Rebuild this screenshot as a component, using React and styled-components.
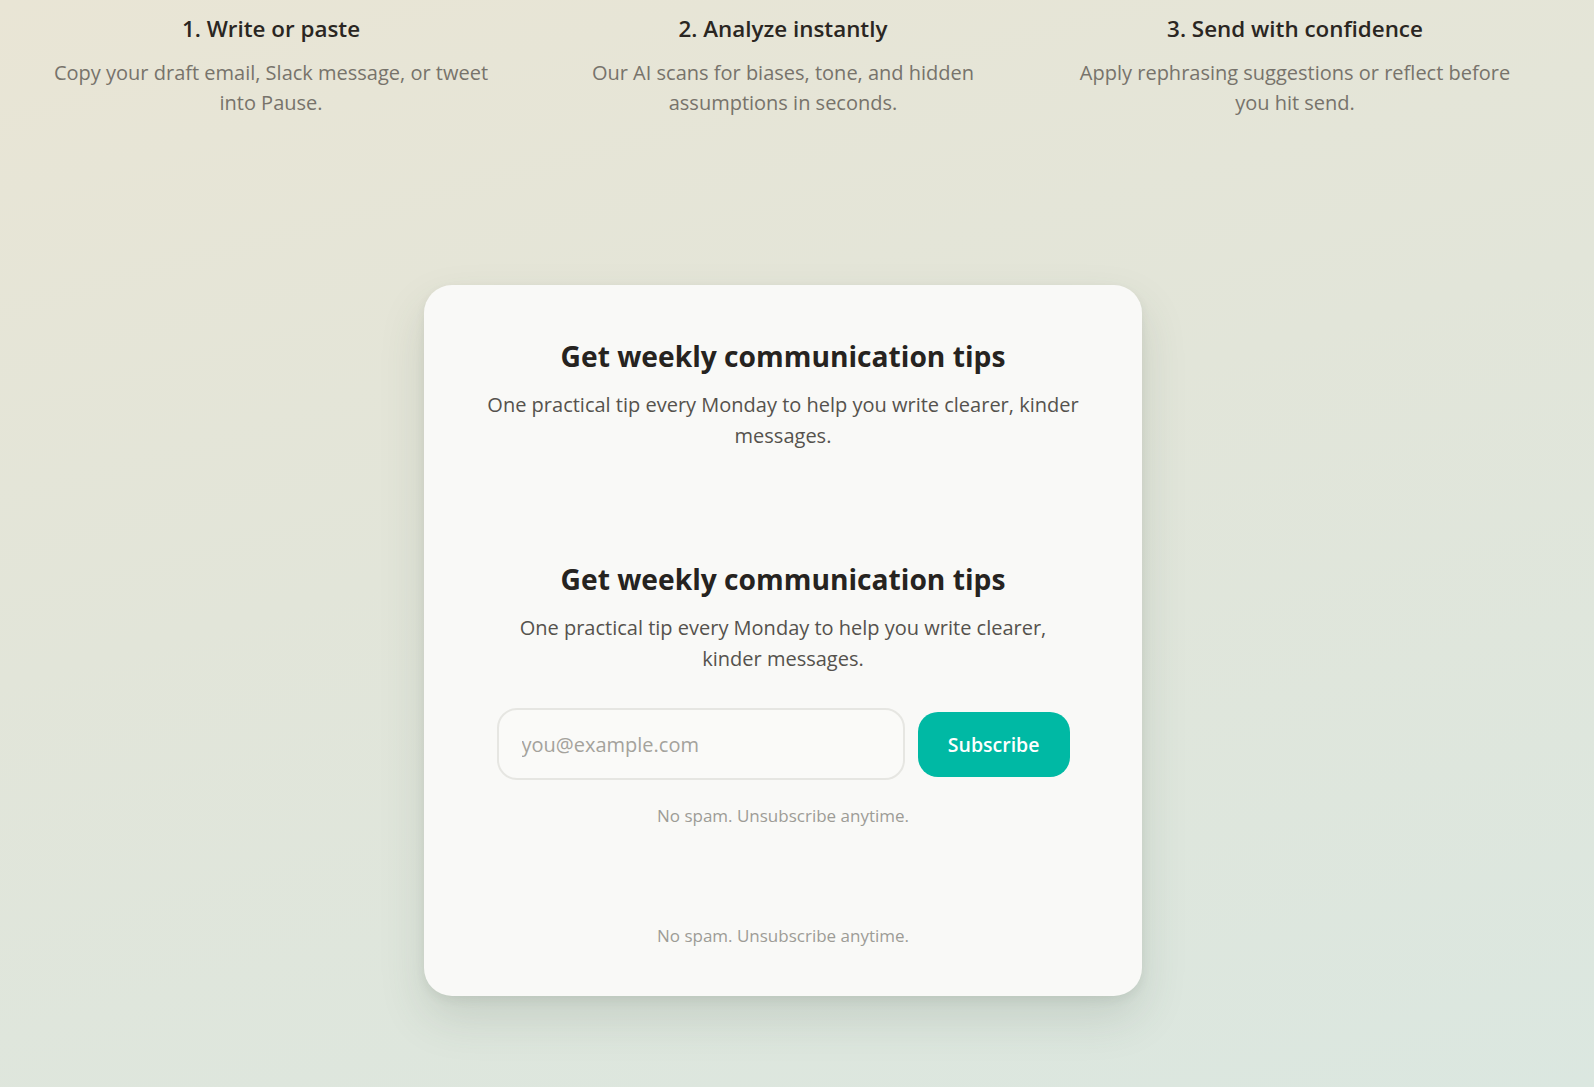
import React from 'react'
import styled, { createGlobalStyle } from 'styled-components'

const GlobalStyle = createGlobalStyle`
    * {
        box-sizing: border-box;
    }
    html, body {
        margin: 0;
        padding: 0;
    }
    body {
        font-family: "Open Sans", "Noto Sans", "Liberation Sans", sans-serif;
        background: linear-gradient(165deg, #e9e5d5 0%, #e2e5d9 45%, #dbe7e0 100%);
        min-height: 100vh;
        color: #2a2622;
    }
`

const steps = [
    { title: '1. Write or paste', text: 'Copy your draft email, Slack message, or tweet into Pause.' },
    { title: '2. Analyze instantly', text: 'Our AI scans for biases, tone, and hidden assumptions in seconds.' },
    { title: '3. Send with confidence', text: 'Apply rephrasing suggestions or reflect before you hit send.' },
]

export default function App() {
    return (
        <Page>
            <GlobalStyle />
            <Steps>
                {steps.map(step => (
                    <Step key={step.title}>
                        <StepTitle>{step.title}</StepTitle>
                        <StepText>{step.text}</StepText>
                    </Step>
                ))}
            </Steps>

            <Card>
                <CardTitle>Get weekly communication tips</CardTitle>
                <CardText>One practical tip every Monday to help you write clearer, kinder messages.</CardText>

                <Newsletter>
                    <CardTitle>Get weekly communication tips</CardTitle>
                    <CardText>One practical tip every Monday to help you write clearer, kinder messages.</CardText>
                    <Form onSubmit={e => e.preventDefault()}>
                        <EmailInput type="email" placeholder="you@example.com" />
                        <SubscribeButton type="submit">Subscribe</SubscribeButton>
                    </Form>
                    <Note>No spam. Unsubscribe anytime.</Note>
                </Newsletter>

                <Note>No spam. Unsubscribe anytime.</Note>
            </Card>
        </Page>
    )
}

const Page = styled.main`
    min-height: 1087px;
    padding: 13px 28px 93px 0;
`
const Steps = styled.section`
    max-width: 1536px;
    margin: 0 auto;
    display: grid;
    grid-template-columns: repeat(3, 1fr);
`
const Step = styled.div`
    display: flex;
    flex-direction: column;
    align-items: center;
    text-align: center;
    padding: 0 32px;
`
const StepTitle = styled.h3`
    margin: 0;
    font-size: 22.4px;
    line-height: 31px;
    font-weight: 600;
    color: #2a2622;
`
const StepText = styled.p`
    margin: 14px 0 0;
    font-size: 20px;
    line-height: 30px;
    color: #77736b;
`
const Card = styled.section`
    width: 718px;
    margin: 167px auto 0;
    padding: 49px 48px 48px;
    background: #f9f9f7;
    border-radius: 28px;
    box-shadow: 0 22px 46px rgba(60, 80, 70, 0.15), 0 4px 10px rgba(60, 80, 70, 0.08);
    display: flex;
    flex-direction: column;
    align-items: center;
    text-align: center;
`
const CardTitle = styled.h2`
    margin: 0;
    font-size: 28.2px;
    line-height: 44px;
    font-weight: 700;
    color: #262320;
`
const CardText = styled.p`
    margin: 12px 0 0;
    font-size: 20px;
    line-height: 30.5px;
    color: #55524d;
`
const Newsletter = styled.div`
    width: 573px;
    margin: 106px 0 0;
    display: flex;
    flex-direction: column;
    align-items: center;
`
const Form = styled.form`
    width: 100%;
    margin-top: 34px;
    display: flex;
    align-items: center;
    gap: 13px;
`
const EmailInput = styled.input`
    flex: 1;
    min-width: 0;
    height: 72px;
    padding: 0 23px;
    font-family: inherit;
    font-size: 20px;
    color: #2a2622;
    background: #fafaf8;
    border: 2px solid #e6e6e2;
    border-radius: 20px;
    outline: none;

    &::placeholder {
        color: #a4a29c;
    }
`
const SubscribeButton = styled.button`
    height: 65px;
    padding: 0 30px;
    font-family: inherit;
    font-size: 19.5px;
    font-weight: 600;
    color: #ffffff;
    background: #00b9a4;
    border: none;
    border-radius: 20px;
    cursor: pointer;
`
const Note = styled.p`
    margin: 24px 0 0;
    font-size: 17px;
    line-height: 24px;
    color: #9d9c96;

    ${Newsletter} + & {
        margin-top: 96px;
    }
`
